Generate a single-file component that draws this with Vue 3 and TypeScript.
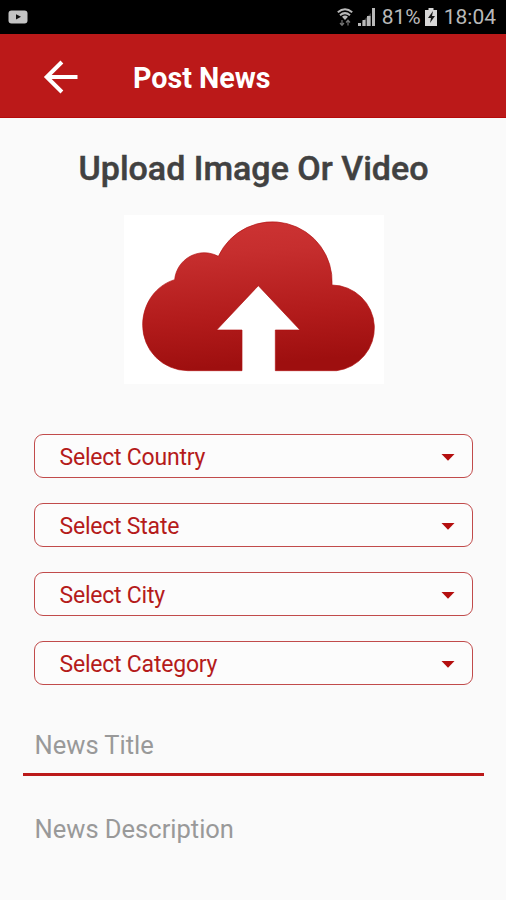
<script setup lang="ts">
import { ref } from 'vue'

const selects = ref<string[]>(['Country', 'State', 'City', 'Category'])
const newsTitle = ref('')
</script>

<template>
  <div class="screen">
    <div class="status">
      <svg class="video" width="20" height="14" viewBox="0 0 20 14">
        <rect x="0.5" y="0.5" width="19" height="13" rx="3" fill="#c4c4c4" />
        <path d="M8 4.2 13 6.8 8 9.5Z" fill="#111" />
      </svg>
      <div class="indicators">
        <svg class="wifi" width="16" height="18" viewBox="0 0 16 18" fill="none" stroke="#b9b9b9">
          <path d="M.8 4.3Q8-1.7 15.2 4.3M3 7.2Q8 3 13 7.2" stroke-width="2" />
          <path d="M5 8.7Q8 6.5 11 8.7L8 12Z" fill="#b9b9b9" stroke="none" />
          <path d="M5 12v5M3 15l2 2.3L7 15M11 17.5v-5M9 14.5l2-2.3 2 2.3" stroke="#777" stroke-width="1.2" />
        </svg>
        <svg class="signal" width="18" height="18" viewBox="0 0 18 18" fill="#b9b9b9">
          <path d="M0 15h3v3H0zM4.500 12h3v6h-3zM9 8h3.500v10H9zM14 0h3v18h-3z" />
          <path d="M4 14 13 5v13H4z" opacity=".35" />
        </svg>
        <span class="percent">81%</span>
        <svg class="battery" width="12" height="18" viewBox="0 0 12 18">
          <path d="M3.5 0h5v2H12v16H0V2h3.500z" fill="#d8d8d8" />
          <path d="M8 3 3 10h3l-1 5 5-7H7z" fill="#161616" />
        </svg>
        <span class="clock">18:04</span>
      </div>
    </div>

    <header class="bar">
      <svg class="back" width="36" height="36" viewBox="0 0 36 36" fill="none" stroke="#fff" stroke-width="4">
        <path d="M34.500 18H4M18.900 3 3.700 18l15.200 15" />
      </svg>
      <h1>Post News</h1>
    </header>

    <main>
      <h2>Upload Image Or Video</h2>
      <svg class="upload" width="260" height="169" viewBox="42 30 780 507">
        <defs>
          <linearGradient id="cloud" x1="0" y1="0" x2="0.12" y2="1">
            <stop offset="0" stop-color="#ce3434" />
            <stop offset="0.25" stop-color="#c62e2e" />
            <stop offset="0.68" stop-color="#b21b1b" />
            <stop offset="1" stop-color="#9e0f0f" />
          </linearGradient>
        </defs>
        <path d="M42 30h780v507H42z" fill="#fff" />
        <path
          d="M233 497A136 136 0 0 1 98 361C98 295 138 241 194 224A89 89 0 0 1 325 154A179 179 0 0 1 666 240A129 129 0 0 1 680 497H496V375H570L445 242 320 375H396V497Z"
          fill="url(#cloud)" stroke="#b01010" stroke-width="2"
        />
      </svg>

      <div class="selects">
        <button v-for="name in selects" :key="name" class="select" type="button">
          <span>Select {{ name }}</span>
          <svg width="14" height="7" viewBox="0 0 14 7"><path d="M.5 0h13L7 6.800z" fill="#b40f0f" /></svg>
        </button>
      </div>

      <input v-model="newsTitle" class="field" placeholder="News Title" />
      <p class="description">News Description</p>
    </main>
  </div>
</template>

<style>
body {
  margin: 0;
  background: #fafafa;
}
</style>

<style scoped>
.screen {
  width: 506px;
  height: 900px;
  overflow: hidden;
  background: #fafafa;
  font-family: Roboto, sans-serif;
}
.status {
  box-sizing: border-box;
  height: 34px;
  padding: 0 10px 0 8px;
  background: #000;
  color: #b9b9b9;
  display: flex;
  align-items: center;
  justify-content: space-between;
}
.indicators {
  display: flex;
  align-items: center;
  font-size: 21px;
  line-height: 34px;
}
.signal {
  margin-left: 5px;
}
.percent {
  margin-left: 6px;
}
.battery {
  margin-left: 4px;
}
.clock {
  margin-left: 7px;
}
.bar {
  box-sizing: border-box;
  height: 84px;
  padding-left: 43px;
  background: #bb1919;
  border-bottom: 1px solid #b50b0b;
  display: flex;
  align-items: center;
}
.back {
  margin-top: 2px;
}
h1 {
  margin: 5px 0 0 54px;
  color: #fff;
  font-size: 28.7px;
  line-height: 34px;
  font-weight: 700;
}
main {
  display: flex;
  flex-direction: column;
  align-items: center;
}
h2 {
  margin: 30px 0 0 1px;
  color: #414141;
  font-size: 34px;
  line-height: 40px;
  font-weight: 500;
  white-space: nowrap;
  -webkit-text-stroke: 0.5px #414141;
}
.upload {
  margin: 27px 0 0 2px;
}
.selects {
  width: 439px;
  margin-top: 50px;
  display: grid;
  gap: 25px;
}
.select {
  box-sizing: border-box;
  height: 44px;
  padding: 2px 17px 0 25px;
  border: 1.5px solid #c14b4b;
  border-radius: 9px;
  background: #fcfcfc;
  color: #b51b1b;
  font: 400 23px/38px Roboto, sans-serif;
  letter-spacing: -0.22px;
  display: flex;
  align-items: center;
  justify-content: space-between;
}
.select span {
  padding-top: 2px;
}
.field {
  box-sizing: border-box;
  width: 461px;
  height: 60px;
  margin-top: 31px;
  padding: 0 11px 0 12px;
  border: 0;
  border-bottom: 3px solid #bb1919;
  outline: 0;
  background: transparent;
  font: 400 25.5px/57px Roboto, sans-serif;
}
.field::placeholder {
  color: #999;
  opacity: 1;
}
.description {
  width: 437px;
  margin: 38px 0 0;
  color: #999;
  font-size: 25.5px;
  line-height: 30px;
}
</style>
